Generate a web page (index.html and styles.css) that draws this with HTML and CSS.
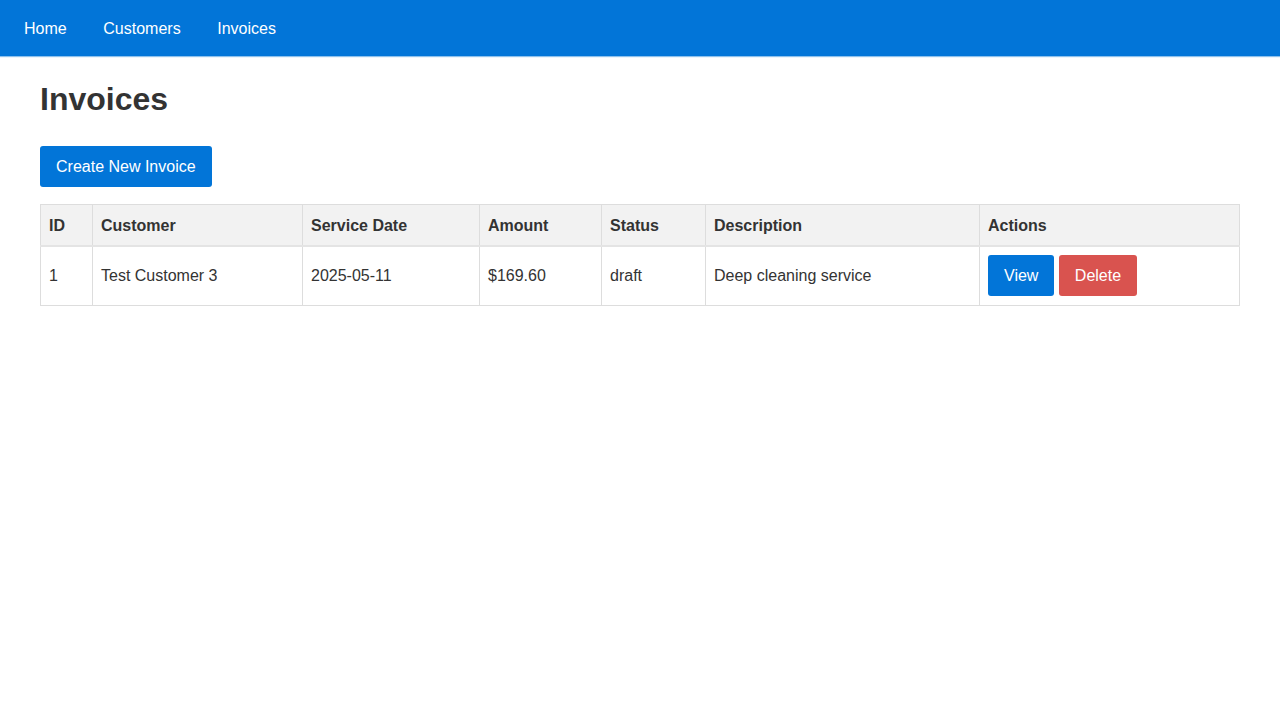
FILE: index.html
```html
<!DOCTYPE html>
<html lang="en">
<head>
<meta charset="utf-8">
<title>Invoices</title>
<link rel="stylesheet" href="styles.css">
</head>
<body>
<nav class="topnav">
  <a class="nav-link" href="#">Home</a>
  <a class="nav-link" href="#">Customers</a>
  <a class="nav-link" href="#">Invoices</a>
</nav>
<main class="container">
  <h1 class="page-title">Invoices</h1>
  <a class="btn btn-primary btn-create" href="#">Create New Invoice</a>
  <table class="data-table">
    <colgroup>
      <col class="c-id">
      <col class="c-customer">
      <col class="c-date">
      <col class="c-amount">
      <col class="c-status">
      <col class="c-desc">
      <col class="c-actions">
    </colgroup>
    <thead>
      <tr>
        <th>ID</th>
        <th>Customer</th>
        <th>Service Date</th>
        <th>Amount</th>
        <th>Status</th>
        <th>Description</th>
        <th>Actions</th>
      </tr>
    </thead>
    <tbody>
      <tr>
        <td>1</td>
        <td>Test Customer 3</td>
        <td>2025-05-11</td>
        <td>$169.60</td>
        <td>draft</td>
        <td>Deep cleaning service</td>
        <td class="actions"><a class="btn btn-primary" href="#">View</a> <button class="btn btn-danger" type="button">Delete</button></td>
      </tr>
    </tbody>
  </table>
</main>
</body>
</html>
```

FILE: styles.css
```css
* {
  box-sizing: border-box;
}

html, body {
  margin: 0;
  padding: 0;
  background: #ffffff;
}

body {
  font-family: "Liberation Sans", Arial, Helvetica, sans-serif;
  font-size: 16px;
  color: #333333;
}

.topnav {
  display: flex;
  align-items: center;
  height: 56px;
  padding: 0 8px;
  background: #0275d8;
  box-shadow: 0 1px 1px rgba(2, 117, 216, 0.45);
}

.nav-link {
  color: #ffffff;
  text-decoration: none;
  padding: 2px 16px 0;
  margin-right: 4.6px;
  line-height: 56px;
}

.container {
  padding: 0 40px;
}

.page-title {
  font-size: 32px;
  font-weight: bold;
  margin: 25px 0 28px;
  color: #333333;
}

.btn {
  display: inline-block;
  font-family: inherit;
  font-size: 16px;
  line-height: 18px;
  padding: 12px 16px 11px;
  border: none;
  border-radius: 3px;
  color: #ffffff;
  text-decoration: none;
  cursor: pointer;
  vertical-align: middle;
}

.btn-primary {
  background: #0275d8;
}

.btn-danger {
  background: #d9534f;
}

.btn-create {
  margin-bottom: 17px;
}

.data-table {
  width: 100%;
  border-collapse: collapse;
  table-layout: fixed;
}

.c-id { width: 52px; }
.c-customer { width: 210px; }
.c-date { width: 177px; }
.c-amount { width: 122px; }
.c-status { width: 104px; }
.c-desc { width: 274px; }
.c-actions { width: 260px; }

.data-table th,
.data-table td {
  border: 1px solid #dddddd;
  text-align: left;
  vertical-align: middle;
}

.data-table th {
  background: #f2f2f2;
  font-weight: bold;
  padding: 12px 8px 10px;
  border-bottom: 2px solid #e4e4e4;
}

.data-table td {
  padding: 8px 8px 9px;
}
```
